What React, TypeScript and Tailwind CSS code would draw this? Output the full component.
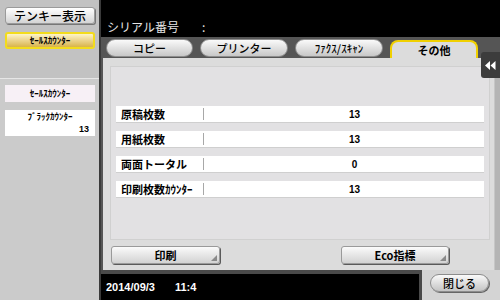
import React from "react";

const jp = { fontFamily: '"Noto Sans CJK JP", "Noto Sans", sans-serif' };

function Corner() {
  return (
    <span className="absolute bottom-[2px] right-[2px] h-0 w-0 border-l-[6px] border-t-[6px] border-l-transparent border-t-transparent border-b-0 border-r-0 [border-right:0] [border-bottom:6px_solid_#8a8a8a] [border-left:6px_solid_transparent] [border-top:0]" />
  );
}

function PanelButton({ label, className }: { label: string; className: string }) {
  return (
    <div
      className={`relative flex h-[18px] items-center justify-center rounded-[3px] border border-[#9a9a9a] bg-gradient-to-b from-[#fbfbfb] to-[#d2d2d2] text-[11px] font-bold text-black shadow-[1px_1px_0_#5a5a5a] ${className}`}
      style={jp}
    >
      {label}
      <Corner />
    </div>
  );
}

function Tab({ label, w, active }: { label: string; w: string; active?: boolean }) {
  if (active) {
    return (
      <div
        className={`${w} mt-[3px] flex h-[18px] items-center justify-center rounded-t-[8px] border-x-2 border-t-2 border-[#f0d000] bg-[#dcdcdc] text-[11px] font-bold text-black`}
        style={jp}
      >
        {label}
      </div>
    );
  }
  return (
    <div
      className={`${w} mt-[2px] flex h-[18px] items-center justify-center rounded-full border border-[#8c8c8c] bg-gradient-to-b from-[#fafafa] to-[#c8c8c8] text-[11px] font-medium text-black`}
      style={jp}
    >
      {label}
    </div>
  );
}

const rows = [
  { label: "原稿枚数", value: "13" },
  { label: "用紙枚数", value: "13" },
  { label: "両面トータル", value: "0" },
  { label: "印刷枚数ｶｳﾝﾀｰ", value: "13" },
];

export default function App() {
  return (
    <div className="relative flex h-[300px] w-[500px] overflow-hidden bg-black" style={jp}>
      {/* Left side */}
      <div className="flex w-[99px] flex-col bg-[#cbcbcb]">
        <div className="flex h-[79px] flex-col gap-[8px] border-b border-[#e6e6e6] bg-[#c2c2c2] pl-[5px] pt-[7px]">
          <div className="flex h-[17px] w-[90px] items-center justify-center rounded-[3px] border border-[#9a9a9a] bg-gradient-to-b from-[#ffffff] to-[#d4d4d4] text-[12px] font-medium text-black shadow-[1px_1px_0_#777]">
            テンキー表示
          </div>
          <div className="flex h-[17px] w-[90px] items-center justify-center rounded-[3px] border-2 border-[#f3dc1c] bg-gradient-to-b from-[#fdf4c8] to-[#d9b448] text-[9px] font-bold text-black">
            ｾｰﾙｽｶｳﾝﾀｰ
          </div>
        </div>
        <div className="flex flex-col gap-[8px] pl-[5px] pt-[6px]">
          <div className="flex h-[17px] w-[90px] items-center justify-center bg-[#f7f0f6] text-[9px] font-bold text-black">
            ｾｰﾙｽｶｳﾝﾀｰ
          </div>
          <div className="flex h-[26px] w-[90px] flex-col bg-white px-[6px] pt-[1px] text-[9px] font-bold leading-[12px] text-black">
            <span className="text-center">ﾌﾞﾗｯｸｶｳﾝﾀｰ</span>
            <span className="text-right" style={{ fontFamily: '"Liberation Sans", sans-serif' }}>13</span>
          </div>
        </div>
      </div>
      <div className="w-[2px] bg-[#3a3a3a]" />

      {/* Main */}
      <div className="flex flex-1 flex-col">
        <div className="flex h-[37px] items-end bg-black pb-[1px] pl-[6px] text-[12px] text-[#e6e6e6]">
          <span className="w-[95px]">シリアル番号</span>
          <span>:</span>
        </div>
        <div className="flex h-[21px] gap-[7px] bg-[#555555] pl-[5px]">
          <Tab label="コピー" w="w-[87px]" />
          <Tab label="プリンター" w="w-[88px]" />
          <Tab label="ﾌｧｸｽ/ｽｷｬﾝ" w="w-[88px]" />
          <Tab label="その他" w="w-[88px]" active />
        </div>

        <div className="flex flex-1">
          <div className="w-[2px] bg-[#555555]" />
          <div className="flex flex-1 flex-col bg-[#dcdcdc] pl-[7px] pr-[4px] pt-[8px]">
            <div className="flex h-[174px] flex-col gap-[9px] border border-[#d0d0d0] bg-[#e2e1e3] px-[5px] pt-[39px]">
              {rows.map((r) => (
                <div key={r.label} className="flex h-[16px] items-center bg-white shadow-[0_1px_0_#cfcfcf]">
                  <span className="w-[87px] pl-[5px] text-[11px] font-bold text-black">{r.label}</span>
                  <span className="h-[12px] w-px bg-[#a8a8a8]" />
                  <span
                    className="flex-1 pl-[21px] text-center text-[10px] font-bold text-black"
                    style={{ fontFamily: '"Liberation Sans", sans-serif' }}
                  >
                    {r.value}
                  </span>
                </div>
              ))}
            </div>
            <div className="mt-[6px] flex">
              <PanelButton label="印刷" className="ml-[1px] w-[109px]" />
              <PanelButton label="Eco指標" className="ml-[121px] w-[108px]" />
            </div>
          </div>
          <div className="w-[6px] border-l border-[#c6c6c6] bg-[#b4b4b4]" />
        </div>

        <div className="flex h-[30px]">
          <div className="flex w-[321px] items-center gap-[20px] border-r-[3px] border-t-[4px] border-[#4a4a4a] bg-black pl-[5px] text-[11px] font-bold text-white" style={{ fontFamily: '"Liberation Sans", sans-serif' }}>
            <span>2014/09/3</span>
            <span>11:4</span>
          </div>
          <div className="flex flex-1 items-start bg-[#d4d4d4] pl-[8px] pt-[4px]">
            <div className="flex h-[18px] w-[59px] items-center justify-center rounded-full border border-[#8c8c8c] bg-gradient-to-b from-[#fafafa] to-[#c4c4c4] text-[11px] font-medium text-black shadow-[1px_1px_0_#666]">
              閉じる
            </div>
          </div>
        </div>
      </div>

      {/* collapse button */}
      <div className="absolute left-[481px] top-[52px] flex h-[26px] w-[19px] items-center justify-center rounded-l-[3px] bg-[#3c3c3c]">
        <svg width="11" height="9" viewBox="0 0 11 9">
          <polygon points="0,4.5 5,0 5,9" fill="#fff" />
          <polygon points="5.5,4.5 10.5,0 10.5,9" fill="#fff" />
        </svg>
      </div>
    </div>
  );
}
